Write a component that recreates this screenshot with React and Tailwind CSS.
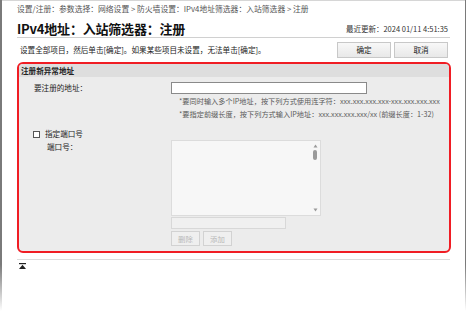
export default function App() {
  const font = { fontFamily: '"Noto Sans CJK SC", "Noto Sans", sans-serif' };
  return (
    <div className="w-[468px] h-[311px] bg-white flex overflow-hidden text-[#222]" style={font}>
      {/* left frame edge */}
      <div className="w-[2px] h-full bg-linear-to-b from-[#7a7a7a] from-85% to-white" />

      <div className="flex-1 flex flex-col px-[15px] border-t border-[#d6d6d6]">
        {/* breadcrumb */}
        <div className="pt-[2px] text-[7.8px] leading-[12px] text-[#555] whitespace-nowrap">
          设置/注册：参数选择：网络设置 &gt; 防火墙设置：IPv4地址筛选器：入站筛选器 &gt; 注册
        </div>

        {/* title row */}
        <div className="mt-[7px] flex items-center justify-between border-b border-[#d0d0d0] pb-[1px]">
          <h1 className="text-[13px] leading-[14px] font-bold text-[#111] tracking-[-0.2px]">IPv4地址：入站筛选器：注册</h1>
          <span className="text-[7.5px] leading-[10px] text-[#333] mr-[2px]">最近更新：2024 01/11 4:51:35</span>
        </div>

        {/* instruction row */}
        <div className="mt-[4px] flex items-center justify-between">
          <p className="pl-[3px] text-[7.6px] leading-[10px] text-[#222] whitespace-nowrap">
            设置全部项目，然后单击[确定]。如果某些项目未设置，无法单击[确定]。
          </p>
          <div className="flex gap-[3px] mr-[2px]">
            <button className="w-[54px] h-[16px] border border-[#c8c8c8] bg-linear-to-b from-[#f8f8f8] to-[#e8e8e8] text-[7.6px] leading-none text-[#222]">确定</button>
            <button className="w-[54px] h-[16px] border border-[#c8c8c8] bg-linear-to-b from-[#f8f8f8] to-[#e8e8e8] text-[7.6px] leading-none text-[#222]">取消</button>
          </div>
        </div>

        {/* red highlighted panel */}
        <div className="mt-[4px] -mr-[1px] border-2 border-[#f01d24] rounded-[6px] overflow-hidden bg-[#ececec]">
          <div className="h-[13px] bg-[#dedede] pl-[2px] text-[7.6px] leading-[13px] font-bold text-[#222]">注册新异常地址</div>

          <div className="pl-[15px] pt-[5px] pb-[5px] flex flex-col">
            {/* address row */}
            <div className="flex items-center">
              <span className="w-[137px] text-[7.6px] leading-[12px]">要注册的地址：</span>
              <div className="w-[196px] h-[12px] bg-white border border-[#8a8a8a]" />
            </div>
            <div className="ml-[145px] mt-[1px] text-[7.2px] leading-[13px] text-[#5a5a5a] whitespace-nowrap">
              <p>*要同时输入多个IP地址，按下列方式使用连字符：xxx.xxx.xxx.xxx-xxx.xxx.xxx.xxx</p>
              <p>*要指定前缀长度，按下列方式输入IP地址：xxx.xxx.xxx.xxx/xx (前缀长度：1-32)</p>
            </div>

            {/* port checkbox */}
            <div className="mt-[7px] flex items-center gap-[5px] -ml-[1px]">
              <span className="w-[7px] h-[7px] border border-[#555] bg-white" />
              <span className="text-[7.6px] leading-[12px]">指定端口号</span>
            </div>

            {/* port row */}
            <div className="flex">
              <span className="w-[137px] pl-[13px] pt-[1px] text-[7.6px] leading-[12px]">端口号：</span>
              <div className="flex flex-col">
                <div className="w-[150px] h-[76px] bg-[#f7f7f7] border border-[#dcdcdc] flex justify-end">
                  <div className="w-[8px] mr-[1px] flex flex-col items-center py-[3px]">
                    <svg width="5" height="4" viewBox="0 0 5 4"><path d="M2.5 0.5 L4.5 3.5 L0.5 3.5 Z" fill="#9a9a9a" /></svg>
                    <div className="mt-[2px] w-[4px] h-[10px] rounded-full bg-[#9a9a9a]" />
                    <div className="flex-1" />
                    <svg width="5" height="4" viewBox="0 0 5 4"><path d="M0.5 0.5 L4.5 0.5 L2.5 3.5 Z" fill="#9a9a9a" /></svg>
                  </div>
                </div>
                <div className="mt-[1px] w-[115px] h-[12px] bg-[#f0f0f0] border border-[#d8d8d8]" />
                <div className="mt-[2px] flex gap-[3px]">
                  <button className="w-[29px] h-[15px] border border-[#d2d2d2] bg-[#efefef] text-[7.4px] leading-none text-[#b8b8b8]">删除</button>
                  <button className="w-[29px] h-[15px] border border-[#d2d2d2] bg-[#efefef] text-[7.4px] leading-none text-[#b8b8b8]">添加</button>
                </div>
              </div>
            </div>
          </div>
        </div>

        {/* footer */}
        <div className="mt-[6px] border-t border-[#dcdcdc] pt-[3px] pl-[2px]">
          <svg width="7" height="6" viewBox="0 0 7 6">
            <rect x="0" y="0" width="7" height="1.2" fill="#222" />
            <path d="M3.5 1.8 L7 6 L0 6 Z" fill="#222" />
          </svg>
        </div>
      </div>

      {/* right frame edge */}
      <div className="w-[1px] h-full bg-linear-to-b from-[#7a7a7a] from-85% to-white" />
      <div className="w-[2px] h-full bg-white" />
    </div>
  );
}
